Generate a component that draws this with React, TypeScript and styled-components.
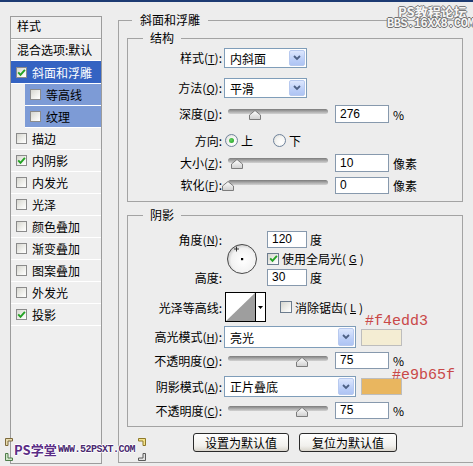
import React from "react";
import styled, { createGlobalStyle } from "styled-components";

const CJK = `"Noto Sans CJK SC", "Noto Sans", sans-serif`;

const Global = createGlobalStyle`
  html, body { margin: 0; padding: 0; background: #ededed; }
  #root { width: 473px; height: 466px; }
`;

const Frame = styled.div`
  position: relative;
  width: 473px;
  height: 466px;
  overflow: hidden;
  background: #ededed;
  font-family: ${CJK};
  font-size: 12px;
  color: #000;
  display: flex;
  flex-direction: column;
`;

const TopBar = styled.div`
  height: 2px;
  flex: none;
  background: #1d3b73;
`;

const Body = styled.div`
  display: flex;
  align-items: flex-start;
  flex: 1;
`;

/* ---------- left style list ---------- */

const StylePanel = styled.div`
  margin: 14px 0 0 10px;
  width: 92px;
  height: 448px;
  box-sizing: border-box;
  border: 1px solid #9c9c9c;
  background: #efefef;
  display: flex;
  flex-direction: column;
  flex: none;
`;

const PanelHeader = styled.div`
  height: 22px;
  line-height: 15px;
  padding: 1px 0 0 6px;
  box-sizing: border-box;
  border-bottom: 1px solid #a6a6a6;
  box-shadow: 0 1px 0 #fff;
`;

const Item = styled.div<{ $h: number; $tone: "none" | "sel" | "sub" | "plain" }>`
  height: ${(p) => p.$h}px;
  flex: none;
  border-bottom: 1px solid #fff;
  display: flex;
  align-items: center;
  gap: 5px;
  margin-left: ${(p) => (p.$tone === "sub" ? 14 : 0)}px;
  padding-left: ${(p) => (p.$tone === "plain" ? 6 : 5)}px;
  background: ${(p) =>
    p.$tone === "sel" ? "#3463c2" : p.$tone === "sub" ? "#7d9bd6" : "transparent"};
  color: ${(p) => (p.$tone === "sel" ? "#fff" : "#000")};
  line-height: 15px;
  white-space: nowrap;
`;

const Box = styled.span<{ $size: number; $border: string }>`
  width: ${(p) => p.$size}px;
  height: ${(p) => p.$size}px;
  box-sizing: border-box;
  border: 1px solid ${(p) => p.$border};
  background: linear-gradient(135deg, #d6d6cf 0%, #f3f3f0 65%, #ffffff 100%);
  display: inline-flex;
  align-items: center;
  justify-content: center;
  flex: none;
`;

const CheckMark = () => (
  <svg width="9" height="9" viewBox="0 0 9 9">
    <path d="M1.2 4.4 L3.5 6.8 L7.9 1.8" fill="none" stroke="#23a223" strokeWidth="1.9" />
  </svg>
);

/* ---------- right side ---------- */

const Outer = styled.fieldset`
  margin: 10px 0 0 16px;
  padding: 2px 0 10px 8px;
  width: 357px;
  box-sizing: border-box;
  border: 1px solid #a3a3a3;
  min-inline-size: 0;
  flex: none;
`;

const Legend = styled.legend<{ $ml: number; $pad: number }>`
  margin-left: ${(p) => p.$ml}px;
  padding: 0 ${(p) => p.$pad}px;
  line-height: 16px;
  font-size: 12px;
`;

const Group = styled.fieldset<{ $mt: number; $pt: number; $pb: number }>`
  margin: ${(p) => p.$mt}px 0 0 0;
  padding: ${(p) => p.$pt}px 0 ${(p) => p.$pb}px 0;
  width: 336px;
  box-sizing: border-box;
  border: 1px solid #a3a3a3;
  min-inline-size: 0;
`;

const FormRow = styled.div<{ $h: number; $mt: number }>`
  display: flex;
  align-items: center;
  height: ${(p) => p.$h}px;
  margin-top: ${(p) => p.$mt}px;
  line-height: 15px;
`;

const Label = styled.div`
  width: 94px;
  flex: none;
  text-align: right;
  white-space: nowrap;
  line-height: 15px;
`;

const U = styled.span`
  text-decoration: underline;
  font-size: 11px;
`;

const Select = styled.div<{ $w: number; $h: number }>`
  width: ${(p) => p.$w}px;
  height: ${(p) => p.$h}px;
  margin-left: 2px;
  box-sizing: border-box;
  border: 1px solid #7f9db9;
  background: #fff;
  display: flex;
  align-items: center;
  justify-content: space-between;
  padding-left: 5px;
  flex: none;
`;

const ArrowBtn = styled.span`
  width: 16px;
  height: calc(100% - 2px);
  margin-right: 1px;
  box-sizing: border-box;
  border: 1px solid #b7c9ef;
  border-radius: 2px;
  background: linear-gradient(#dde7fd, #bccff8 60%, #aec4f3);
  display: flex;
  align-items: center;
  justify-content: center;
`;

const Chevron = () => (
  <svg width="8" height="6" viewBox="0 0 8 6">
    <path d="M1 1 L4 4 L7 1" fill="none" stroke="#4d6185" strokeWidth="1.8" />
  </svg>
);

const SliderBox = styled.div`
  position: relative;
  width: 100px;
  height: 14px;
  margin-left: 6px;
  flex: none;
`;

const Track = styled.div`
  position: absolute;
  left: 0;
  right: 0;
  top: 2px;
  height: 5px;
  border-radius: 3px;
  background: linear-gradient(#7b7b7b, #adadad 55%, #d2d2d2);
`;

const ThumbSvg = styled.svg`
  position: absolute;
  top: 3px;
`;

const Slider = ({ at }: { at: number }) => (
  <SliderBox>
    <Track />
    <ThumbSvg width="12" height="10" viewBox="0 0 12 10" style={{ left: at - 6 }}>
      <defs>
        <linearGradient id="tg" x1="0" y1="0" x2="0" y2="1">
          <stop offset="0" stopColor="#ffffff" />
          <stop offset="1" stopColor="#cfcfcf" />
        </linearGradient>
      </defs>
      <polygon points="6,0.5 11.5,5 11.5,9.5 0.5,9.5 0.5,5" fill="url(#tg)" stroke="#7c7c7c" />
    </ThumbSvg>
  </SliderBox>
);

const NumBox = styled.div<{ $w: number; $h: number; $ml: number }>`
  width: ${(p) => p.$w}px;
  height: ${(p) => p.$h}px;
  margin-left: ${(p) => p.$ml}px;
  box-sizing: border-box;
  border: 1px solid #8799ad;
  background: #fff;
  padding-left: 4px;
  display: flex;
  align-items: center;
  font-family: "Liberation Sans", Arial, sans-serif;
  font-size: 12px;
  flex: none;
`;

const Unit = styled.span<{ $ml: number }>`
  margin-left: ${(p) => p.$ml}px;
  white-space: nowrap;
  line-height: 13px;
`;

const Radio = styled.span<{ $ml: number }>`
  width: 13px;
  height: 13px;
  margin-left: ${(p) => p.$ml}px;
  box-sizing: border-box;
  border-radius: 50%;
  border: 1px solid #6f839c;
  background: radial-gradient(circle at 65% 65%, #ffffff 0%, #f4f4f2 50%, #d5d5cf 100%);
  display: inline-flex;
  align-items: center;
  justify-content: center;
  flex: none;
`;

const Dot = styled.span`
  width: 5px;
  height: 5px;
  border-radius: 50%;
  background: radial-gradient(circle at 40% 40%, #5ed35e, #1f9a1f);
`;

const AngleBlock = styled.div`
  display: grid;
  grid-template-columns: 94px 45px auto;
  grid-template-rows: 17px 21px 17px;
  align-items: center;
  line-height: 15px;
`;

const Dial = styled.svg`
  grid-column: 2;
  grid-row: 1 / span 3;
  margin-left: 4px;
`;

const Cell = styled.div<{ $col: number; $row: number; $right?: boolean }>`
  grid-column: ${(p) => p.$col};
  grid-row: ${(p) => p.$row};
  display: flex;
  align-items: center;
  justify-content: ${(p) => (p.$right ? "flex-end" : "flex-start")};
  white-space: nowrap;
  height: 100%;
`;

const CheckLabel = styled.span<{ $ml: number }>`
  display: inline-flex;
  align-items: center;
  gap: 3px;
  margin-left: ${(p) => p.$ml}px;
  white-space: nowrap;
`;

const Contour = styled.div`
  width: 41px;
  height: 30px;
  margin-left: 3px;
  box-sizing: border-box;
  border: 1px solid #000;
  background: #fff;
  display: flex;
  flex: none;
`;

const ContourArrow = styled.div`
  flex: 1;
  border-left: 1px solid #000;
  display: flex;
  align-items: center;
  justify-content: center;
`;

const Swatch = styled.div<{ $c: string }>`
  width: 41px;
  height: 17px;
  margin-left: 5px;
  box-sizing: border-box;
  border: 1px solid #bdbdbd;
  background: ${(p) => p.$c};
  flex: none;
`;

const ButtonRow = styled.div`
  width: 336px;
  margin-top: 6px;
  display: flex;
  justify-content: center;
  gap: 10px;
`;

const Btn = styled.button<{ $w: number }>`
  width: ${(p) => p.$w}px;
  height: 19px;
  padding: 0;
  border: 1px solid #2a2a2a;
  border-radius: 3px;
  background: linear-gradient(#ffffff, #f1f0ec 70%, #d9d5cc);
  font-family: ${CJK};
  font-size: 12px;
  line-height: 15px;
  color: #000;
`;

/* ---------- overlays ---------- */

const Note = styled.div<{ $x: number; $y: number }>`
  position: absolute;
  left: ${(p) => p.$x}px;
  top: ${(p) => p.$y}px;
  font-family: "Liberation Mono", "Courier New", monospace;
  font-size: 15px;
  line-height: 12px;
  color: #c94848;
  white-space: nowrap;
`;

const Mark = styled.div<{ $x: number; $y: number; $size: number; $lh: number; $mono?: boolean; $fill: string; $edge: string }>`
  position: absolute;
  left: ${(p) => p.$x}px;
  top: ${(p) => p.$y}px;
  font-family: ${(p) => (p.$mono ? `"Liberation Mono", monospace` : CJK)};
  font-size: ${(p) => p.$size}px;
  line-height: ${(p) => p.$lh}px;
  font-weight: bold;
  letter-spacing: ${(p) => (p.$mono ? "-0.5px" : "0")};
  color: ${(p) => p.$fill};
  text-shadow: -1px 0 ${(p) => p.$edge}, 1px 0 ${(p) => p.$edge}, 0 -1px ${(p) => p.$edge},
    0 1px ${(p) => p.$edge};
  white-space: nowrap;
`;

const Corner = styled.svg<{ $x: number; $y: number }>`
  position: absolute;
  left: ${(p) => p.$x}px;
  top: ${(p) => p.$y}px;
`;

const items: { name: string; on: boolean; tone: "none" | "sel" | "sub"; h: number }[] = [
  { name: "斜面和浮雕", on: true, tone: "sel", h: 22 },
  { name: "等高线", on: false, tone: "sub", h: 21 },
  { name: "纹理", on: false, tone: "sub", h: 21 },
  { name: "描边", on: false, tone: "none", h: 21 },
  { name: "内阴影", on: true, tone: "none", h: 21 },
  { name: "内发光", on: false, tone: "none", h: 21 },
  { name: "光泽", on: false, tone: "none", h: 21 },
  { name: "颜色叠加", on: false, tone: "none", h: 21 },
  { name: "渐变叠加", on: false, tone: "none", h: 21 },
  { name: "图案叠加", on: false, tone: "none", h: 21 },
  { name: "外发光", on: false, tone: "none", h: 21 },
  { name: "投影", on: true, tone: "none", h: 21 },
];

export default function App() {
  return (
    <Frame>
      <Global />
      <TopBar />
      <Body>
        <StylePanel>
          <PanelHeader>样式</PanelHeader>
          <Item $h={21} $tone="plain">
            混合选项:默认
          </Item>
          {items.map((it) => (
            <Item key={it.name} $h={it.h} $tone={it.tone}>
              <Box $size={11} $border="#8b8b8b">{it.on && <CheckMark />}</Box>
              {it.name}
            </Item>
          ))}
        </StylePanel>

        <Outer>
          <Legend $ml={5} $pad={8}>斜面和浮雕</Legend>

          <Group $mt={0} $pt={2} $pb={7}>
            <Legend $ml={15} $pad={7}>结构</Legend>
            <FormRow $h={20} $mt={0}>
              <Label>样式(<U>T</U>):</Label>
              <Select $w={83} $h={20}>
                内斜面
                <ArrowBtn><Chevron /></ArrowBtn>
              </Select>
            </FormRow>
            <FormRow $h={20} $mt={10}>
              <Label>方法(<U>Q</U>):</Label>
              <Select $w={83} $h={20}>
                平滑
                <ArrowBtn><Chevron /></ArrowBtn>
              </Select>
            </FormRow>
            <FormRow $h={18} $mt={7}>
              <Label>深度(<U>D</U>):</Label>
              <Slider at={27} />
              <NumBox $w={54} $h={18} $ml={7}>276</NumBox>
              <Unit $ml={4}>%</Unit>
            </FormRow>
            <FormRow $h={18} $mt={8}>
              <Label>方向:</Label>
              <Radio $ml={3}><Dot /></Radio>
              <Unit $ml={3}>上</Unit>
              <Radio $ml={20} />
              <Unit $ml={3}>下</Unit>
            </FormRow>
            <FormRow $h={18} $mt={5}>
              <Label>大小(<U>Z</U>):</Label>
              <Slider at={9} />
              <NumBox $w={54} $h={18} $ml={7}>10</NumBox>
              <Unit $ml={4}>像素</Unit>
            </FormRow>
            <FormRow $h={18} $mt={4}>
              <Label>软化(<U>F</U>):</Label>
              <Slider at={0} />
              <NumBox $w={54} $h={17} $ml={7}>0</NumBox>
              <Unit $ml={4}>像素</Unit>
            </FormRow>
          </Group>

          <Group $mt={5} $pt={8} $pb={7}>
            <Legend $ml={15} $pad={7}>阴影</Legend>
            <AngleBlock>
              <Cell $col={1} $row={1} $right>角度(<U>N</U>):</Cell>
              <Cell $col={1} $row={3} $right>高度:</Cell>
              <Dial width="32" height="32" viewBox="0 0 32 32">
                <defs>
                  <radialGradient id="dg" cx="0.55" cy="0.55" r="0.6">
                    <stop offset="0" stopColor="#ffffff" />
                    <stop offset="0.7" stopColor="#f2f2f2" />
                    <stop offset="1" stopColor="#bdbdbd" />
                  </radialGradient>
                </defs>
                <circle cx="16" cy="16" r="14.5" fill="url(#dg)" stroke="#4a4a4a" strokeWidth="1" />
                <rect x="15" y="15" width="2.2" height="2.2" fill="#000" />
                <path d="M10.5 3.5 V8.5 M8 6 H13" stroke="#222" strokeWidth="0.9" />
              </Dial>
              <Cell $col={3} $row={1}>
                <NumBox $w={40} $h={17} $ml={0}>120</NumBox>
                <Unit $ml={3}>度</Unit>
              </Cell>
              <Cell $col={3} $row={2}>
                <CheckLabel $ml={0}>
                  <Box $size={12} $border="#6c7c8e"><CheckMark /></Box>
                  使用全局光(<U>G</U>)
                </CheckLabel>
              </Cell>
              <Cell $col={3} $row={3}>
                <NumBox $w={40} $h={17} $ml={0}>30</NumBox>
                <Unit $ml={3}>度</Unit>
              </Cell>
            </AngleBlock>
            <FormRow $h={30} $mt={6}>
              <Label>光泽等高线:</Label>
              <Contour>
                <svg width="29" height="28" viewBox="0 0 29 28">
                  <polygon points="0,28 29,0 29,28" fill="#9e9e9e" />
                </svg>
                <ContourArrow>
                  <svg width="5" height="3" viewBox="0 0 5 3">
                    <polygon points="0,0 5,0 2.5,3" fill="#000" />
                  </svg>
                </ContourArrow>
              </Contour>
              <CheckLabel $ml={14}>
                <Box $size={12} $border="#6c7c8e" />
                消除锯齿(<U>L</U>)
              </CheckLabel>
            </FormRow>
            <FormRow $h={22} $mt={4}>
              <Label>高光模式(<U>H</U>):</Label>
              <Select $w={132} $h={22}>
                亮光
                <ArrowBtn><Chevron /></ArrowBtn>
              </Select>
              <Swatch $c="#f4edd3" />
            </FormRow>
            <FormRow $h={17} $mt={4}>
              <Label>不透明度(<U>O</U>):</Label>
              <Slider at={74} />
              <NumBox $w={54} $h={17} $ml={7}>75</NumBox>
              <Unit $ml={4}>%</Unit>
            </FormRow>
            <FormRow $h={21} $mt={7}>
              <Label>阴影模式(<U>A</U>):</Label>
              <Select $w={132} $h={21}>
                正片叠底
                <ArrowBtn><Chevron /></ArrowBtn>
              </Select>
              <Swatch $c="#e9b65f" />
            </FormRow>
            <FormRow $h={17} $mt={5}>
              <Label>不透明度(<U>C</U>):</Label>
              <Slider at={74} />
              <NumBox $w={54} $h={17} $ml={7}>75</NumBox>
              <Unit $ml={4}>%</Unit>
            </FormRow>
          </Group>

          <ButtonRow>
            <Btn $w={96}>设置为默认值</Btn>
            <Btn $w={98}>复位为默认值</Btn>
          </ButtonRow>
        </Outer>
      </Body>

      <Note $x={365} $y={316}>#f4edd3</Note>
      <Note $x={392} $y={370}>#e9b65f</Note>

      <Mark $x={398} $y={5} $size={13} $lh={13} $fill="#f6f6f6" $edge="#7a7a7a">PS教程论坛</Mark>
      <Mark $x={387} $y={20} $size={12} $lh={9} $mono $fill="#f6f6f6" $edge="#6e6e6e">BBS.16XX8.COM</Mark>

      <Mark $x={14} $y={443} $size={13} $lh={13} $fill="#5a2d86" $edge="#ffffff">PS学堂</Mark>
      <Mark $x={58} $y={445} $size={10} $lh={10} $mono $fill="#4a2a70" $edge="#ffffff">WWW.52PSXT.COM</Mark>

      <Corner $x={5} $y={438} width="8" height="8" viewBox="0 0 8 8">
        <path d="M0.5 7.5 V0.5 H7.5 V3 H3 V7.5 Z" fill="#e8dcb0" stroke="#7d6a3c" />
      </Corner>
      <Corner $x={5} $y={453} width="8" height="8" viewBox="0 0 8 8">
        <path d="M0.5 0.5 V7.5 H7.5 V5 H3 V0.5 Z" fill="#cfe6c8" stroke="#4e7d4a" />
      </Corner>
      <Corner $x={138} $y={438} width="8" height="8" viewBox="0 0 8 8">
        <path d="M0.5 0.5 H7.5 V7.5 H5 V3 H0.5 Z" fill="#f3e28a" stroke="#8f7a2a" />
      </Corner>
      <Corner $x={138} $y={453} width="8" height="8" viewBox="0 0 8 8">
        <path d="M7.5 0.5 V7.5 H0.5 V5 H5 V0.5 Z" fill="#e0e0e0" stroke="#5a5a5a" />
      </Corner>
    </Frame>
  );
}
